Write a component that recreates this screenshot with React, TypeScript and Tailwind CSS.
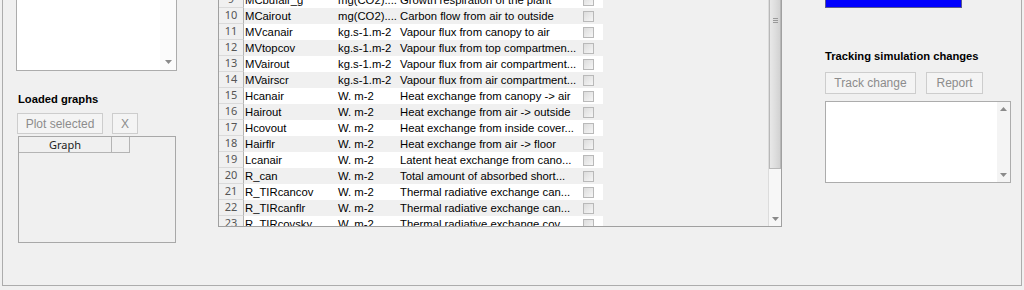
import type { ReactNode } from "react";

type Row = { n: number; name: string; unit: string; desc: string };

const rows: Row[] = [
  { n: 8, name: "MCbufair_s", unit: "mg(CO2)....", desc: "Maintenance respiration of th..." },
  { n: 9, name: "MCbufair_g", unit: "mg(CO2)....", desc: "Growth respiration of the plant" },
  { n: 10, name: "MCairout", unit: "mg(CO2)....", desc: "Carbon flow from air to outside" },
  { n: 11, name: "MVcanair", unit: "kg.s-1.m-2", desc: "Vapour flux from canopy to air" },
  { n: 12, name: "MVtopcov", unit: "kg.s-1.m-2", desc: "Vapour flux from top compartmen..." },
  { n: 13, name: "MVairout", unit: "kg.s-1.m-2", desc: "Vapour flux from air compartment..." },
  { n: 14, name: "MVairscr", unit: "kg.s-1.m-2", desc: "Vapour flux from air compartment..." },
  { n: 15, name: "Hcanair", unit: "W. m-2", desc: "Heat exchange from canopy -> air" },
  { n: 16, name: "Hairout", unit: "W. m-2", desc: "Heat exchange from air -> outside" },
  { n: 17, name: "Hcovout", unit: "W. m-2", desc: "Heat exchange from inside cover..." },
  { n: 18, name: "Hairflr", unit: "W. m-2", desc: "Heat exchange from air -> floor" },
  { n: 19, name: "Lcanair", unit: "W. m-2", desc: "Latent heat exchange from cano..." },
  { n: 20, name: "R_can", unit: "W. m-2", desc: "Total amount of absorbed short..." },
  { n: 21, name: "R_TIRcancov", unit: "W. m-2", desc: "Thermal radiative exchange can..." },
  { n: 22, name: "R_TIRcanflr", unit: "W. m-2", desc: "Thermal radiative exchange can..." },
  { n: 23, name: "R_TIRcovsky", unit: "W. m-2", desc: "Thermal radiative exchange cov..." },
];

/** Greyed-out Windows style push button. */
function DisabledButton({ children, className }: { children: ReactNode; className: string }) {
  return (
    <div
      className={`flex items-center justify-center border border-[#cdcdcd] bg-[#f4f4f4] text-[12px] text-[#8c8c8c] ${className}`}
    >
      {children}
    </div>
  );
}

function Arrow({ up }: { up?: boolean }) {
  return (
    <svg width="7" height="4" viewBox="0 0 7 4">
      <path d={up ? "M0 4 L3.5 0 L7 4 Z" : "M0 0 L7 0 L3.5 4 Z"} fill="#8a8a8a" />
    </svg>
  );
}

function Checkbox() {
  return (
    <div className="h-[11px] w-[11px] border border-[#b9b9b9] bg-gradient-to-br from-[#dcdcdc] to-[#f6f6f6]" />
  );
}

function TableRow({ row }: { row: Row }) {
  const odd = row.n % 2 === 1;
  return (
    <div className="flex h-[16px] items-center">
      <div className="flex h-full w-[25px] shrink-0 items-center justify-center border-b border-r border-b-[#dadada] border-r-[#b4b4b4] bg-[#f0f0f0] text-[11px] text-[#555] font-['Noto_Sans',sans-serif]">
        {row.n}
      </div>
      <div className={`flex h-full w-[359px] shrink-0 items-center text-[11.3px] text-black ${odd ? "bg-white" : "bg-[#f0f0f0]"}`}>
        <span className="w-[92px] overflow-hidden whitespace-nowrap pl-[1px]">{row.name}</span>
        <span className="w-[62px] overflow-hidden whitespace-nowrap pl-[2px]">{row.unit}</span>
        <span className="w-[181px] overflow-hidden whitespace-nowrap pl-[2px]">{row.desc}</span>
        <span className="flex w-[24px] pl-[4px]">
          <Checkbox />
        </span>
      </div>
    </div>
  );
}

function VarTable() {
  return (
    <div className="flex h-[251px] w-[564px] shrink-0 border border-[#a0a0a0] bg-[#f0f0f0]">
      <div className="flex-1 overflow-hidden">
        <div className="mt-[-1px]">
          {rows.map((r) => (
            <TableRow key={r.n} row={r} />
          ))}
        </div>
      </div>
      <div className="flex w-[13px] shrink-0 flex-col border-l border-[#dcdcdc] bg-[#f7f7f7]">
        <div className="flex h-[192px] items-end justify-center border border-[#b8b8b8] bg-gradient-to-r from-[#e8e8e8] via-[#dedede] to-[#d2d2d2] pb-[145px]">
          <div className="flex flex-col gap-[1px]">
            <div className="h-px w-[5px] bg-[#999]" />
            <div className="h-px w-[5px] bg-[#999]" />
            <div className="h-px w-[5px] bg-[#999]" />
          </div>
        </div>
        <div className="flex-1" />
        <div className="flex h-[14px] items-center justify-center">
          <Arrow />
        </div>
      </div>
    </div>
  );
}

export default function App() {
  return (
    <div className="h-[290px] w-[1024px] overflow-hidden bg-[#f0f0f0] font-['Liberation_Sans',Arial,sans-serif]">
      <div className="ml-[2px] mt-[-24px] flex h-[310px] w-[1020px] border-x border-b border-[#acacac]">
        {/* left column: top list + loaded graphs */}
        <div className="w-[215px] shrink-0">
          <div className="ml-[13px] flex h-[95px] w-[161px] border border-[#acacac] bg-white">
            <div className="flex-1" />
            <div className="flex w-[16px] flex-col justify-end bg-[#fbfbfb] pb-[6px]">
              <div className="flex justify-center">
                <Arrow />
              </div>
            </div>
          </div>
          <div className="ml-[15px] mt-[21px] text-[11.2px] font-bold leading-[14px] text-black">Loaded graphs</div>
          <div className="ml-[14px] mt-[7px] flex gap-[9px]">
            <DisabledButton className="h-[21px] w-[86px]">Plot selected</DisabledButton>
            <DisabledButton className="h-[21px] w-[26px]">X</DisabledButton>
          </div>
          <div className="ml-[15px] mt-[2px] h-[107px] w-[158px] border border-[#a8a8a8] bg-[#f0f0f0]">
            <div className="flex h-[16px] text-[11px] text-[#222] font-['Noto_Sans',sans-serif]">
              <div className="flex w-[93px] items-center justify-center border-b border-r border-[#b4b4b4] leading-none">
                Graph
              </div>
              <div className="w-[18px] border-b border-r border-[#b4b4b4]" />
            </div>
          </div>
        </div>

        <VarTable />

        {/* right column: tracking */}
        <div className="pl-[43px]">
          <div className="h-[32px] w-[137px] border border-[#5a5a8c] bg-[#0000ff]" />
          <div className="mt-[41px] text-[11.2px] font-bold leading-[14px] text-black">Tracking simulation changes</div>
          <div className="mt-[9px] flex gap-[10px]">
            <DisabledButton className="h-[22px] w-[91px]">Track change</DisabledButton>
            <DisabledButton className="h-[22px] w-[57px]">Report</DisabledButton>
          </div>
          <div className="mt-[7px] flex h-[82px] w-[186px] border border-[#acacac] bg-white">
            <div className="flex-1" />
            <div className="flex w-[13px] flex-col items-center justify-between bg-[#f4f4f4] py-[5px]">
              <Arrow up />
              <Arrow />
            </div>
          </div>
        </div>
      </div>
    </div>
  );
}
